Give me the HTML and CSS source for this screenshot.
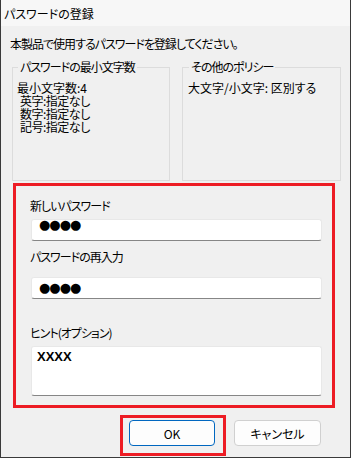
FILE: index.html
```html
<!DOCTYPE html>
<html lang="ja">
<head>
<meta charset="utf-8">
<title>パスワードの登録</title>
<link rel="stylesheet" href="styles.css">
</head>
<body>
<div class="window">
  <div class="titlebar">パスワードの登録</div>
  <div class="content">
    <p class="intro">本製品で使用するパスワードを登録してください。</p>
    <div class="groups">
      <fieldset class="group">
        <legend>パスワードの最小文字数</legend>
        <div class="line">最小文字数:4</div>
        <div class="line sub">英字:指定なし</div>
        <div class="line sub">数字:指定なし</div>
        <div class="line sub">記号:指定なし</div>
      </fieldset>
      <fieldset class="group group-right">
        <legend>その他のポリシー</legend>
        <div class="line">大文字/小文字: 区別する</div>
      </fieldset>
    </div>
    <div class="highlight">
      <div class="field-label">新しいパスワード</div>
      <div class="input input-first"><span class="dots">●●●●</span></div>
      <div class="field-label label-second">パスワードの再入力</div>
      <div class="input input-second"><span class="dots">●●●●</span></div>
      <div class="field-label label-third">ヒント(オプション)</div>
      <div class="input textarea"><span class="hint">XXXX</span></div>
    </div>
    <div class="buttons">
      <div class="ok-frame"><button class="btn btn-primary">OK</button></div>
      <button class="btn btn-cancel">キャンセル</button>
    </div>
  </div>
</div>
</body>
</html>
```

FILE: styles.css
```css
* { box-sizing: border-box; }
html, body { margin: 0; padding: 0; }
body {
  width: 351px;
  height: 458px;
  overflow: hidden;
  background: #f0f0f0;
  font-family: "Noto Sans CJK JP", sans-serif;
  font-size: 12px;
  color: #000;
  font-feature-settings: "palt";
}
.window {
  width: 351px;
  height: 458px;
  border: 1px solid #3a3a3a;
  border-top: none;
  background: #f0f0f0;
  display: flex;
  flex-direction: column;
}
.titlebar {
  height: 26px;
  padding: 2px 0 0 3px;
  line-height: 24px;
  background: #f7f7f7;
}
.content {
  padding: 0 9px 0 11px;
  display: flex;
  flex-direction: column;
}
.intro {
  margin: 11px 0 0 -2px;
  line-height: 14px;
  letter-spacing: -1px;
}
.groups {
  display: flex;
  gap: 12px;
  margin-top: 9px;
}
.group {
  margin: 0;
  width: 158px;
  height: 121px;
  padding: 7px 0 0 4px;
  border: 1px solid #dcdcdc;
  min-width: 0;
}
.group-right {
  width: 159px;
  padding-left: 5px;
}
.group legend {
  padding: 0 2px;
  margin-left: 1px;
  line-height: 14px;
  letter-spacing: -1px;
}
.line { line-height: 13px; white-space: nowrap; }
.sub { padding-left: 3px; letter-spacing: -0.5px; }

.highlight {
  margin: 2px 0 0 1px;
  width: 322px;
  height: 225px;
  border: 3px solid #ed1c24;
  padding: 13px 10px 9px 14px;
  display: flex;
  flex-direction: column;
}
.field-label { line-height: 14px; white-space: nowrap; letter-spacing: -1px; }
.label-second { margin-top: 9px; }
.label-third { margin-top: 27px; }
.input {
  margin-left: 1px;
  width: 291px;
  height: 22px;
  background: #fff;
  border: 1px solid #e8e8e8;
  border-bottom: 1px solid #868686;
  border-radius: 3px;
  padding-left: 7px;
}
.input-first { margin-top: 6px; }
.input-second { margin-top: 13px; }
.textarea { margin-top: 6px; height: 50px; padding-left: 5px; }
.dots {
  display: block;
  font-family: "DejaVu Sans", sans-serif;
  font-size: 13px;
  letter-spacing: -1px;
  line-height: 12px;
}
.input-first .dots { margin-top: -1px; }
.input-second .dots { margin-top: 4px; }
.hint {
  display: block;
  font-family: "Liberation Sans", sans-serif;
  font-weight: bold;
  font-size: 13px;
  line-height: 14px;
  margin-top: 3px;
}

.buttons {
  display: flex;
  align-items: flex-start;
  justify-content: flex-end;
  margin-top: 7px;
  padding-right: 20px;
}
.ok-frame {
  border: 3px solid #ed1c24;
  padding: 2px 8px 7px 6px;
}
.btn {
  width: 86px;
  height: 26px;
  border-radius: 4px;
  background: #fdfdfd;
  border: 1px solid #d0d0d0;
  font-family: "Noto Sans CJK JP", sans-serif;
  font-size: 12px;
  color: #000;
  padding: 0;
  font-feature-settings: "palt";
}
.btn-primary { border-color: #0067c0; }
.btn-cancel { width: 87px; margin: 5px 0 0 8px; }
```
